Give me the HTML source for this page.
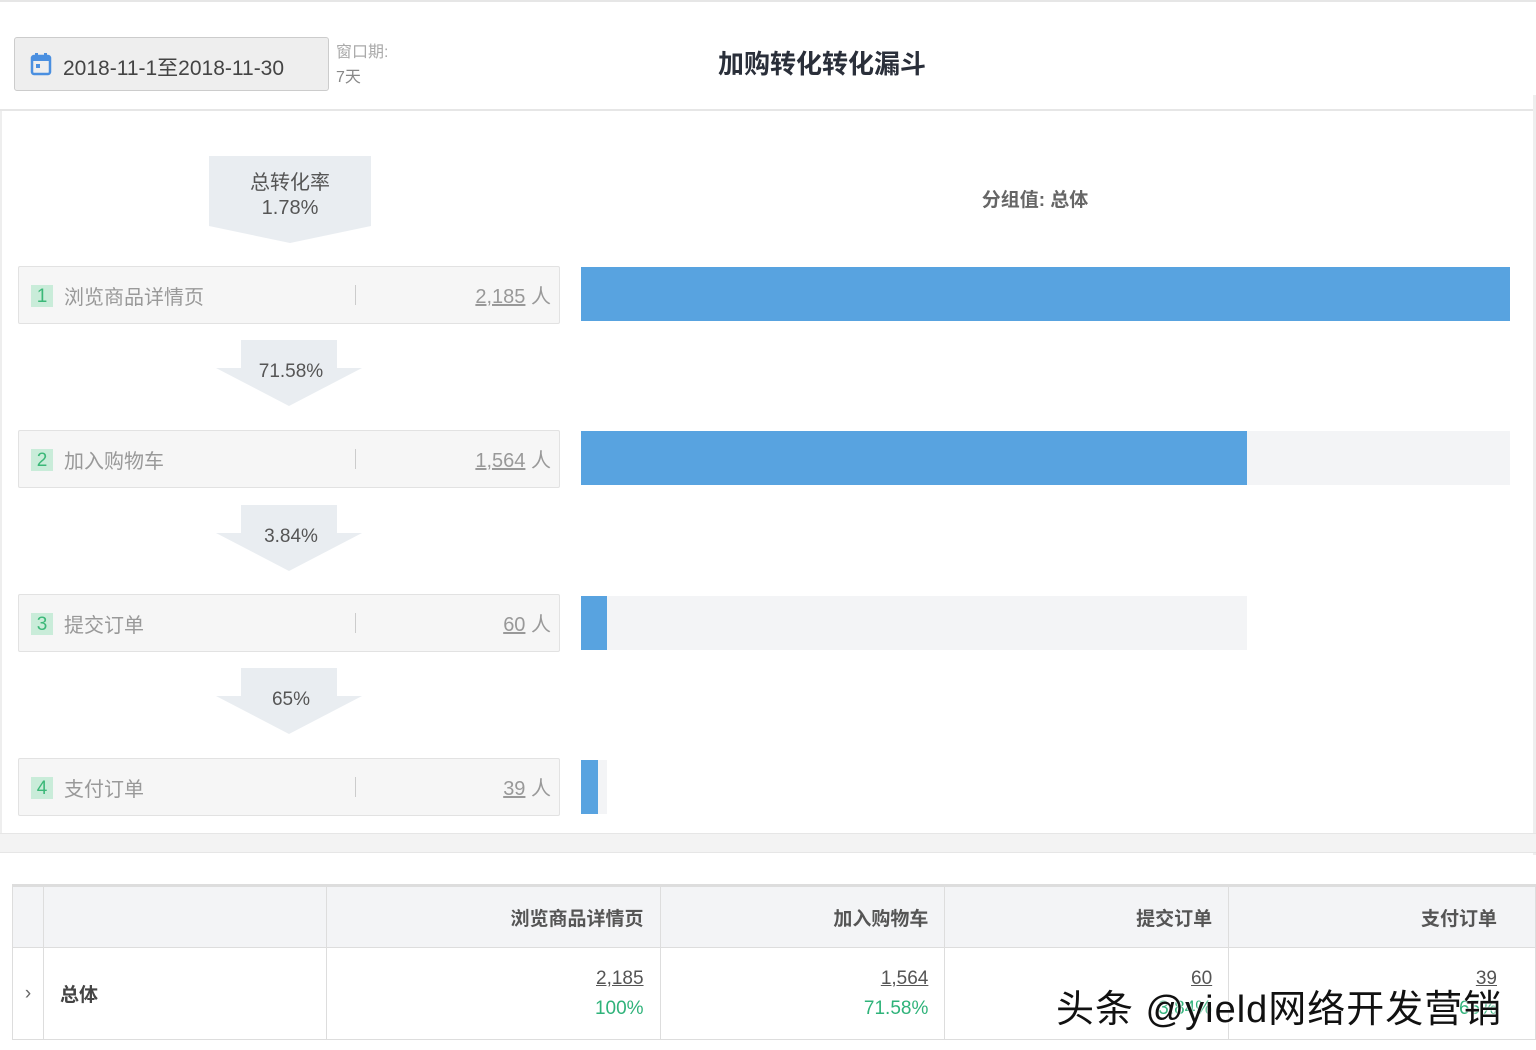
<!DOCTYPE html><html><head><meta charset="utf-8"><style>
*{margin:0;padding:0;box-sizing:border-box}
body{width:1536px;height:1050px;background:#fff;position:relative;overflow:hidden;font-family:"Liberation Sans","Noto Sans CJK SC",sans-serif;color:#666}
.a{position:absolute}
.row{position:absolute;left:18px;width:542px;height:58px;background:#f6f6f6;border:1px solid #e2e2e2;border-radius:2px}
.num{position:absolute;left:12px;top:18px;width:22px;height:22px;background:#c9ecd9;color:#3bb878;font-size:19px;text-align:center;line-height:24px}
.lab{position:absolute;left:45px;top:14px;font-size:20px;color:#999}
.sep{position:absolute;left:336px;top:18px;width:1px;height:20px;background:#ccc}
.val{position:absolute;right:8px;top:13px;font-size:20px;color:#999}
.val u{text-decoration:underline}
.arr{position:absolute;left:216px;width:146px;height:66px}
.arr div.t{position:absolute;left:4px;right:0;top:21px;text-align:center;font-size:19px;color:#555}
.bg{position:absolute;left:581px;height:54px;background:#f3f4f6}
.bar{position:absolute;left:581px;height:54px;background:#58a3e0}
table{position:absolute;left:12px;top:884px;border-collapse:collapse;font-size:19px}
td{border:1px solid #ddd;text-align:right;padding-right:16px;color:#555}
</style></head><body>
<div class="a" style="left:0;top:0;width:1536px;height:2px;background:#e6e6e6"></div>
<div class="a" style="left:14px;top:37px;width:315px;height:54px;background:#eee;border:1px solid #ccc;border-radius:3px">
<svg class="a" style="left:15px;top:14px" width="22" height="24" viewBox="0 0 22 24"><rect x="2" y="4" width="18" height="18" rx="2" fill="none" stroke="#4a8fe0" stroke-width="2.5"/><rect x="2" y="4" width="18" height="5" fill="#4a8fe0"/><rect x="5" y="1" width="3" height="5" fill="#4a8fe0"/><rect x="14" y="1" width="3" height="5" fill="#4a8fe0"/><rect x="6" y="12" width="4" height="4" fill="#4a8fe0"/></svg>
<div class="a" style="left:48px;top:14px;font-size:21px;color:#444">2018-11-1至2018-11-30</div></div>
<div class="a" style="left:336px;top:40px;font-size:16px;color:#aaa;line-height:25px">窗口期:<br><span style="color:#888">7天</span></div>
<div class="a" style="left:600px;top:44px;width:444px;text-align:center;font-size:26px;font-weight:bold;color:#2a2f3a">加购转化转化漏斗</div>
<div class="a" style="left:0;top:109px;width:1536px;height:2px;background:#e6e6e6"></div>
<div class="a" style="left:0;top:111px;width:2px;height:722px;background:#eee"></div>
<div class="a" style="left:1533px;top:95px;width:3px;height:760px;background:#eee"></div>
<svg class="a" style="left:209px;top:156px" width="162" height="87"><polygon points="0,0 162,0 162,70 81,87 0,70" fill="#e9edf1"/></svg>
<div class="a" style="left:209px;top:171px;width:162px;text-align:center;font-size:20px;color:#555;line-height:25px">总转化率<br>1.78%</div>
<div class="a" style="left:880px;top:185px;width:310px;text-align:center;font-size:19px;font-weight:bold;color:#666">分组值: 总体</div>
<div class="row" style="top:266px"><div class="num">1</div><div class="lab">浏览商品详情页</div><div class="sep"></div><div class="val"><u>2,185</u> 人</div></div>
<div class="row" style="top:430px"><div class="num">2</div><div class="lab">加入购物车</div><div class="sep"></div><div class="val"><u>1,564</u> 人</div></div>
<div class="row" style="top:594px"><div class="num">3</div><div class="lab">提交订单</div><div class="sep"></div><div class="val"><u>60</u> 人</div></div>
<div class="row" style="top:758px"><div class="num">4</div><div class="lab">支付订单</div><div class="sep"></div><div class="val"><u>39</u> 人</div></div>
<div class="arr" style="top:340px"><svg width="146" height="66"><polygon points="25,0 121,0 121,28 146,28 73,66 0,28 25,28" fill="#e9edf1"/></svg><div class="t">71.58%</div></div>
<div class="arr" style="top:505px"><svg width="146" height="66"><polygon points="25,0 121,0 121,28 146,28 73,66 0,28 25,28" fill="#e9edf1"/></svg><div class="t">3.84%</div></div>
<div class="arr" style="top:668px"><svg width="146" height="66"><polygon points="25,0 121,0 121,28 146,28 73,66 0,28 25,28" fill="#e9edf1"/></svg><div class="t">65%</div></div>
<div class="bar" style="top:267px;width:929px"></div>
<div class="bg" style="top:431px;width:929px"></div><div class="bar" style="top:431px;width:666px"></div>
<div class="bg" style="top:596px;width:666px"></div><div class="bar" style="top:596px;width:26px"></div>
<div class="bg" style="top:760px;width:26px"></div><div class="bar" style="top:760px;width:17px"></div>
<div class="a" style="left:0;top:833px;width:1536px;height:20px;background:#f3f3f3;border-top:1px solid #e6e6e6;border-bottom:1px solid #e6e6e6"></div>
<table><tr style="height:62px;background:#f3f4f6;font-weight:bold;border-top:3px solid #ddd"><td style="width:31px"></td><td style="width:283px"></td><td style="width:334px">浏览商品详情页</td><td style="width:285px">加入购物车</td><td style="width:284px">提交订单</td><td style="width:307px;padding-right:38px">支付订单</td></tr>
<tr style="height:92px"><td style="text-align:center;padding:0;color:#666">›</td><td style="text-align:left;padding-left:16px;font-weight:bold;color:#444">总体</td>
<td style="line-height:30px"><u>2,185</u><br><span style="color:#2fb37a">100%</span></td>
<td style="line-height:30px"><u>1,564</u><br><span style="color:#2fb37a">71.58%</span></td>
<td style="line-height:30px"><u>60</u><br><span style="color:#2fb37a">3.84%</span></td>
<td style="line-height:30px;padding-right:38px"><u>39</u><br><span style="color:#2fb37a">65%</span></td></tr></table>
<div class="a" style="left:1056px;top:978px;font-size:38px;color:#111;letter-spacing:1px;text-shadow:0 0 2px #fff,0 0 2px #fff">头条 @yield网络开发营销</div>
</body></html>
